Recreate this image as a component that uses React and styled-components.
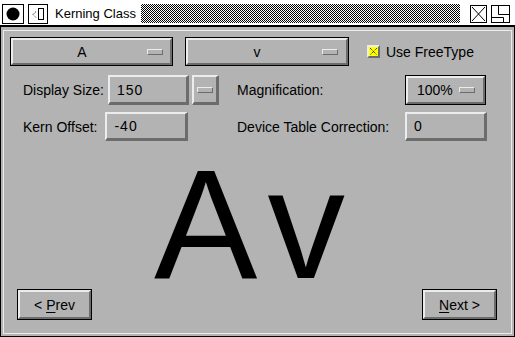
import styled, { createGlobalStyle } from "styled-components";

const FACE = "#b3b3b3";
const LIGHT = "#ececec";
const DARK = "#6c6c6c";

const GlobalStyle = createGlobalStyle`
  *, *::before, *::after { box-sizing: border-box; }
  html, body { margin: 0; padding: 0; background: #fff; }
  body { font-family: "Liberation Sans", Arial, sans-serif; color: #000; }
`;

const Window = styled.div`
  width: 515px;
  height: 337px;
  display: flex;
  flex-direction: column;
  overflow: hidden;
  background: #fff;
`;

const TitleBar = styled.div`
  height: 27px;
  flex: none;
  display: flex;
  align-items: center;
  padding: 2px 5px 0 2px;
  border-bottom: 2px solid #000;
  background: #fff;
`;

const IconBox = styled.div`
  width: ${(p) => p.$w}px;
  height: ${(p) => p.$h}px;
  margin-left: ${(p) => p.$ml || 0}px;
  border: 1px solid #000;
  display: flex;
  align-items: center;
  justify-content: center;
  flex: none;
  svg { display: block; }
`;

const Title = styled.span`
  margin-left: 7px;
  font-size: 13px;
  white-space: nowrap;
`;

const Dither = styled.div`
  flex: 1;
  height: 19px;
  margin: 0 10px 0 5px;
  background-image: conic-gradient(#000 25%, #fff 0 50%, #000 0 75%, #fff 0);
  background-size: 2px 2px;
`;

const Body = styled.div`
  flex: 1;
  display: flex;
  background: ${FACE};
  border: 1px solid #000;
  border-top: none;
`;

const Frame = styled.div`
  flex: 1;
  margin: 3px 2px 2px 2px;
  border: 1px solid ${LIGHT};
  display: flex;
  flex-direction: column;
  padding: 6px 6px 13px 6px;
`;

const Row = styled.div`
  display: flex;
  align-items: center;
  height: ${(p) => p.$h}px;
  margin-top: ${(p) => p.$mt || 0}px;
  flex: none;
`;

const RingButton = styled.div`
  width: ${(p) => p.$w}px;
  height: ${(p) => p.$h}px;
  margin-left: ${(p) => p.$ml || 0}px;
  border: 1px solid #000;
  display: flex;
  flex: none;
`;

const Bevel = styled.div`
  flex: 1;
  display: flex;
  align-items: center;
  justify-content: ${(p) => p.$justify || "center"};
  padding: ${(p) => p.$pad || "0"};
  border: 2px solid;
  border-color: ${LIGHT} ${DARK} ${DARK} ${LIGHT};
  font-size: 14px;
  white-space: pre;
`;

const DropLabel = styled.span`
  flex: 1;
  text-align: center;
`;

const Indicator = styled.span`
  width: 16px;
  height: 6px;
  flex: none;
  margin: ${(p) => p.$m || "0"};
  border: 1px solid;
  border-color: ${LIGHT} ${DARK} ${DARK} ${LIGHT};
  background: ${FACE};
`;

const Check = styled.span`
  width: 13px;
  height: 13px;
  margin-left: 18px;
  flex: none;
  border: 2px solid;
  border-color: ${LIGHT} ${DARK} ${DARK} ${LIGHT};
  background: #ffff00;
  svg { display: block; }
`;

const Label = styled.span`
  font-size: 14px;
  white-space: nowrap;
  margin-left: ${(p) => p.$ml || 0}px;
  width: ${(p) => (p.$w ? `${p.$w}px` : "auto")};
  flex: none;
`;

const LeftGroup = styled.div`
  width: 227px;
  padding-left: 13px;
  display: flex;
  align-items: center;
  flex: none;
`;

const Field = styled.div`
  width: ${(p) => p.$w}px;
  height: ${(p) => p.$h}px;
  margin-left: ${(p) => p.$ml || 0}px;
  flex: none;
  display: flex;
  align-items: center;
  padding-left: 7px;
  border-style: solid;
  border-width: 2px 3px 3px 2px;
  border-color: ${LIGHT} ${DARK} ${DARK} ${LIGHT};
  font-size: 14px;
  letter-spacing: 1px;
`;

const SmallButton = styled.div`
  width: 27px;
  height: 30px;
  margin-left: 3px;
  flex: none;
  display: flex;
  align-items: center;
  justify-content: center;
  border-style: solid;
  border-width: 2px 3px 3px 2px;
  border-color: ${LIGHT} ${DARK} ${DARK} ${LIGHT};
`;

const Stage = styled.div`
  flex: 1 1 0;
  min-height: 0;
  display: flex;
  align-items: flex-start;
  padding-left: 144px;
`;

const BigText = styled.div`
  margin-top: 24px;
  font-size: 155px;
  line-height: 120px;
  white-space: nowrap;
  span + span { margin-left: 10px; }
`;

const BottomRow = styled.div`
  display: flex;
  justify-content: space-between;
  padding: 0 8px 0 7px;
  height: 31px;
  flex: none;
`;

const Mnemonic = styled.span`
  text-decoration: underline;
  text-underline-offset: 2px;
`;

export default function App() {
  return (
    <>
      <GlobalStyle />
      <Window>
        <TitleBar>
          <IconBox $w={22} $h={20}>
            <svg width="14" height="14" viewBox="0 0 14 14">
              <circle cx="7" cy="7" r="6.5" fill="#000" />
            </svg>
          </IconBox>
          <IconBox $w={20} $h={20} $ml={4}>
            <svg width="14" height="14" viewBox="0 0 14 14">
              <path d="M5 4.5 L2 7.5 L5 10.5" fill="none" stroke="#000" strokeWidth="1" strokeDasharray="1 1" />
              <rect x="7.5" y="1.5" width="5" height="11" fill="none" stroke="#000" strokeWidth="1" />
            </svg>
          </IconBox>
          <Title>Kerning Class</Title>
          <Dither />
          <IconBox $w={17} $h={18}>
            <svg width="15" height="16" viewBox="0 0 15 16">
              <path d="M1 1 L14 15 M14 1 L1 15" stroke="#000" strokeWidth="1" />
            </svg>
          </IconBox>
          <IconBox $w={19} $h={18} $ml={4}>
            <svg width="17" height="16" viewBox="0 0 17 16">
              <path d="M6.5 0 V8.5 H17" fill="none" stroke="#000" strokeWidth="1" />
              <path d="M0 11.5 H11.5 V16" fill="none" stroke="#000" strokeWidth="1" />
            </svg>
          </IconBox>
        </TitleBar>
        <Body>
          <Frame>
            <Row $h={29}>
              <RingButton $w={163} $h={29}>
                <Bevel $pad="0 7px 0 4px">
                  <DropLabel>A</DropLabel>
                  <Indicator />
                </Bevel>
              </RingButton>
              <RingButton $w={164} $h={29} $ml={12}>
                <Bevel $pad="0 8px 0 4px">
                  <DropLabel>v</DropLabel>
                  <Indicator />
                </Bevel>
              </RingButton>
              <Check>
                <svg width="9" height="9" viewBox="0 0 9 9">
                  <path d="M1 1 L8 8 M8 1 L1 8" stroke="#000" strokeWidth="1" strokeDasharray="1 1" />
                </svg>
              </Check>
              <Label $ml={6}>Use FreeType</Label>
            </Row>
            <Row $h={30} $mt={9}>
              <LeftGroup>
                <Label>Display Size:</Label>
                <Field $w={81} $h={30} $ml={4}>150</Field>
                <SmallButton>
                  <Indicator />
                </SmallButton>
              </LeftGroup>
              <Label $w={168}>Magnification:</Label>
              <RingButton $w={81} $h={30}>
                <Bevel $justify="flex-start" $pad="0 0 0 9px">
                  <span>100%</span>
                  <Indicator $m="0 0 0 6px" />
                </Bevel>
              </RingButton>
            </Row>
            <Row $h={29} $mt={7}>
              <LeftGroup>
                <Label>Kern Offset:</Label>
                <Field $w={83} $h={29} $ml={8}>-40</Field>
              </LeftGroup>
              <Label $w={168}>Device Table Correction:</Label>
              <Field $w={82} $h={29}>0</Field>
            </Row>
            <Stage>
              <BigText>
                <span>A</span>
                <span>v</span>
              </BigText>
            </Stage>
            <BottomRow>
              <RingButton $w={75} $h={31}>
                <Bevel>
                  <span>
                    {"< "}
                    <Mnemonic>P</Mnemonic>rev
                  </span>
                </Bevel>
              </RingButton>
              <RingButton $w={75} $h={31}>
                <Bevel>
                  <span>
                    <Mnemonic>N</Mnemonic>
                    {"ext >"}
                  </span>
                </Bevel>
              </RingButton>
            </BottomRow>
          </Frame>
        </Body>
      </Window>
    </>
  );
}
